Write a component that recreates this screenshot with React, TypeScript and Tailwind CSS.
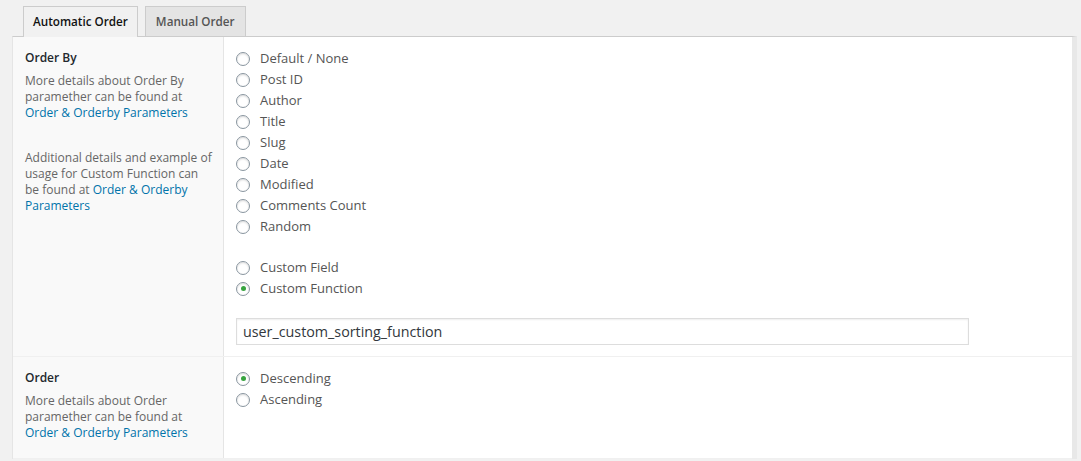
import React from "react";

const font = { fontFamily: '"Open Sans", "Noto Sans", sans-serif' };

function Radio({ label, checked = false }: { label: string; checked?: boolean }) {
  return (
    <div className="flex h-[21px] items-center">
      <span className="ml-[12px] flex h-[14px] w-[14px] items-center justify-center rounded-full border border-[#8a96a0] bg-white shadow-[inset_0_1px_2px_rgba(0,0,0,0.15)]">
        {checked && <span className="h-[5px] w-[5px] rounded-full bg-[#37a33f]" />}
      </span>
      <span className="ml-[10px] text-[13px] leading-[21px] text-[#555]">{label}</span>
    </div>
  );
}

function Link({ children }: { children: React.ReactNode }) {
  return <span className="text-[#0073aa]">{children}</span>;
}

export default function App() {
  return (
    <div className="h-[461px] w-full overflow-hidden bg-[#f1f1f1]" style={font}>
      <div className="flex pl-[23px] pt-[6px]">
        <div className="relative z-10 -mb-px flex h-[31px] items-center border border-b-0 border-[#ccc] bg-[#f1f1f1] px-[9px] text-[11.7px] font-semibold text-[#111]">
          Automatic Order
        </div>
        <div className="ml-[7px] flex h-[30px] items-center border border-b-0 border-[#ccc] bg-[#e4e4e4] px-[10px] text-[11.7px] font-semibold text-[#555]">
          Manual Order
        </div>
      </div>
      <div className="ml-[12px] mr-[4px] border-l border-t border-l-[#e5e5e5] border-t-[#ccc] border-r-[5px] border-r-[#e8e8e8]">
        <div className="flex border-b border-[#f0f0f0]">
          <div className="w-[211px] shrink-0 border-r border-[#e5e5e5] bg-[#f9f9f9] pl-[12px] pr-[9px] pt-[13px]">
            <div className="text-[12px] font-semibold leading-[16px] text-[#23282d]">Order By</div>
            <div className="mt-[7px] text-[12px] leading-[16px] text-[#666]">
              More details about Order By paramether can be found at <Link>Order &amp; Orderby Parameters</Link>
            </div>
            <div className="mt-[29px] text-[12px] leading-[16px] text-[#666]">
              Additional details and example of usage for Custom Function can be found at <Link>Order &amp; Orderby Parameters</Link>
            </div>
          </div>
          <div className="flex-1 bg-white pb-[11px] pt-[11px]">
            <Radio label="Default / None" />
            <Radio label="Post ID" />
            <Radio label="Author" />
            <Radio label="Title" />
            <Radio label="Slug" />
            <Radio label="Date" />
            <Radio label="Modified" />
            <Radio label="Comments Count" />
            <Radio label="Random" />
            <div className="mt-[20px]">
              <Radio label="Custom Field" />
              <Radio label="Custom Function" checked />
            </div>
            <div className="ml-[12px] mt-[19px] flex h-[27px] w-[733px] items-center border border-[#ddd] px-[6px] text-[14.3px] text-[#32373c] shadow-[inset_0_1px_2px_rgba(0,0,0,0.07)]">
              user_custom_sorting_function
            </div>
          </div>
        </div>
        <div className="flex min-h-[100px] border-b border-[#f0f0f0]">
          <div className="w-[211px] shrink-0 border-r border-[#e5e5e5] bg-[#f9f9f9] pl-[12px] pr-[9px] pb-[17px] pt-[13px]">
            <div className="text-[12px] font-semibold leading-[16px] text-[#23282d]">Order</div>
            <div className="mt-[7px] text-[12px] leading-[16px] text-[#666]">
              More details about Order paramether can be found at <Link>Order &amp; Orderby Parameters</Link>
            </div>
          </div>
          <div className="flex-1 bg-white pt-[11px]">
            <Radio label="Descending" checked />
            <Radio label="Ascending" />
          </div>
        </div>
      </div>
    </div>
  );
}
